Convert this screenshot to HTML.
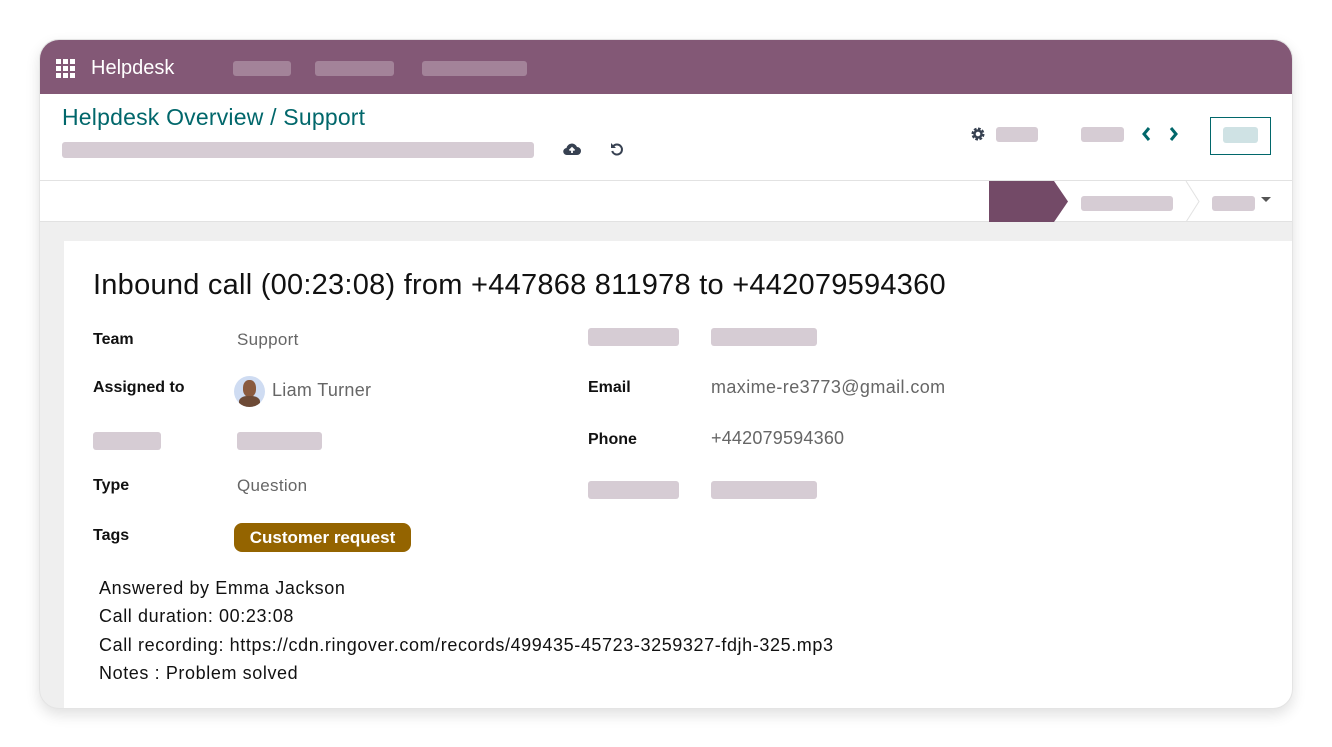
<!DOCTYPE html>
<html><head><meta charset="utf-8"><style>
*{margin:0;padding:0;box-sizing:border-box}
body{width:1332px;height:747px;background:#fff;font-family:"Liberation Sans",sans-serif;position:relative;overflow:hidden}
.card{position:absolute;left:39px;top:39px;width:1254px;height:670px;border-radius:20px;overflow:hidden;background:#efefef;box-shadow:0 6px 14px rgba(0,0,0,.12);border:1px solid #e4e4e4}
.a{position:absolute}
.ph{position:absolute;background:#d6ccd4;border-radius:3px}
.hb{position:absolute;background:#a38399;border-radius:3px;height:15px;top:21px}
.lbl{position:absolute;font-size:16px;font-weight:bold;color:#111}
.val{position:absolute;font-size:17px;color:#666;letter-spacing:0.3px}
.note{position:absolute;left:59px;font-size:18px;color:#111;letter-spacing:0.6px}
</style></head><body>
<div class="card">
 <div class="a" style="left:0;top:0;width:1254px;height:54px;background:#835876"></div>
 <svg class="a" style="left:16px;top:19px" width="19" height="19" viewBox="0 0 19 19" fill="#fff"><rect x="0" y="0" width="5" height="5"/><rect x="7" y="0" width="5" height="5"/><rect x="14" y="0" width="5" height="5"/><rect x="0" y="7" width="5" height="5"/><rect x="7" y="7" width="5" height="5"/><rect x="14" y="7" width="5" height="5"/><rect x="0" y="14" width="5" height="5"/><rect x="7" y="14" width="5" height="5"/><rect x="14" y="14" width="5" height="5"/></svg>
 <div class="a" style="left:51px;top:17px;color:#fff;font-size:20px">Helpdesk</div>
 <div class="hb" style="left:193px;width:58px"></div>
 <div class="hb" style="left:275px;width:79px"></div>
 <div class="hb" style="left:382px;width:105px"></div>
 <div class="a" style="left:0;top:54px;width:1254px;height:128px;background:#fff;border-bottom:1px solid #e2e2e2"></div>
 <div class="a" style="left:0;top:140px;width:1254px;height:1px;background:#e2e2e2"></div>
 <div class="a" style="left:22px;top:64px;font-size:23px;color:#01676b;letter-spacing:0.2px">Helpdesk Overview / Support</div>
 <div class="ph" style="left:22px;top:102px;width:472px;height:16px"></div>
 <svg class="a" style="left:522px;top:101px" width="20" height="16" viewBox="0 0 20 16"><path d="M5 14h10a4 4 0 0 0 0-8 5.5 5.5 0 0 0-10.5 1A3.5 3.5 0 0 0 5 14z" fill="#374151"/><path d="M10 12V7M7.5 9.5L10 7l2.5 2.5" stroke="#fff" stroke-width="1.8" fill="none"/></svg>
 <svg class="a" style="left:569px;top:101px" width="16" height="16" viewBox="0 0 16 16"><path d="M4 5.5A5 5 0 1 1 3.2 10" stroke="#374151" stroke-width="2" fill="none"/><path d="M2 2v5h5z" fill="#374151"/></svg>
 <svg class="a" style="left:931px;top:87px" width="14" height="14" viewBox="0 0 14 14"><circle cx="7" cy="7" r="5" fill="none" stroke="#374151" stroke-width="3" stroke-dasharray="2.5 1.4"/><circle cx="7" cy="7" r="3.5" fill="none" stroke="#374151" stroke-width="2.4"/></svg>
 <div class="ph" style="left:956px;top:87px;width:42px;height:15px"></div>
 <div class="ph" style="left:1041px;top:87px;width:43px;height:15px"></div>
 <svg class="a" style="left:1101px;top:86px" width="40" height="16" viewBox="0 0 40 16"><path d="M8 2L3 8l5 6" stroke="#01676b" stroke-width="3" fill="none"/><path d="M30 2l5 6-5 6" stroke="#01676b" stroke-width="3" fill="none"/></svg>
 <div class="a" style="left:1170px;top:77px;width:61px;height:38px;border:1.5px solid #01676b"></div>
 <div class="a" style="left:1183px;top:87px;width:35px;height:16px;background:#cfe2e4;border-radius:3px"></div>
 <svg class="a" style="left:949px;top:141px" width="305" height="41" viewBox="0 0 305 41"><path d="M0 0h65l14 20.5L65 41H0z" fill="#734a67"/><path d="M197 0l13 20.5L197 41" stroke="#e2e2e2" fill="none"/><path d="M272 16h10l-5 5z" fill="#555"/></svg>
 <div class="ph" style="left:1041px;top:156px;width:92px;height:15px"></div>
 <div class="ph" style="left:1172px;top:156px;width:43px;height:15px"></div>
 <div class="a" style="left:24px;top:201px;width:1240px;height:480px;background:#fff"></div>
 <div class="a" style="left:53px;top:229px;font-size:29px;color:#111;letter-spacing:0.25px">Inbound call (00:23:08) from +447868 811978 to +442079594360</div>
 <div class="lbl" style="left:53px;top:291px">Team</div><div class="val" style="left:197px;top:290px">Support</div>
 <div class="lbl" style="left:53px;top:339px">Assigned to</div>
 <div class="a" style="left:194px;top:336px;width:31px;height:31px;border-radius:50%;background:#cfdcf2;overflow:hidden"><div class="a" style="left:9px;top:4px;width:13px;height:17px;border-radius:45%;background:#8a5a3e"></div><div class="a" style="left:5px;top:20px;width:21px;height:14px;border-radius:40%;background:#6d4a36"></div></div>
 <div class="val" style="left:232px;top:340px;font-size:18px">Liam Turner</div>
 <div class="ph" style="left:53px;top:392px;width:68px;height:18px"></div>
 <div class="ph" style="left:197px;top:392px;width:85px;height:18px"></div>
 <div class="lbl" style="left:53px;top:437px">Type</div><div class="val" style="left:197px;top:436px">Question</div>
 <div class="lbl" style="left:53px;top:487px">Tags</div>
 <div class="a" style="left:194px;top:483px;width:177px;height:29px;border-radius:8px;background:#946400;color:#fff;font-size:17px;font-weight:bold;text-align:center;line-height:29px">Customer request</div>
 <div class="ph" style="left:548px;top:288px;width:91px;height:18px"></div>
 <div class="ph" style="left:671px;top:288px;width:106px;height:18px"></div>
 <div class="lbl" style="left:548px;top:339px">Email</div><div class="val" style="left:671px;top:337px;font-size:18px;letter-spacing:0.4px">maxime-re3773@gmail.com</div>
 <div class="lbl" style="left:548px;top:391px">Phone</div><div class="val" style="left:671px;top:388px;font-size:18px;letter-spacing:0.2px">+442079594360</div>
 <div class="ph" style="left:548px;top:441px;width:91px;height:18px"></div>
 <div class="ph" style="left:671px;top:441px;width:106px;height:18px"></div>
 <div class="note" style="top:538px">Answered by Emma Jackson</div>
 <div class="note" style="top:566px">Call duration: 00:23:08</div>
 <div class="note" style="top:595px">Call recording: https://cdn.ringover.com/records/499435-45723-3259327-fdjh-325.mp3</div>
 <div class="note" style="top:623px">Notes : Problem solved</div>
</div>
</body></html>
